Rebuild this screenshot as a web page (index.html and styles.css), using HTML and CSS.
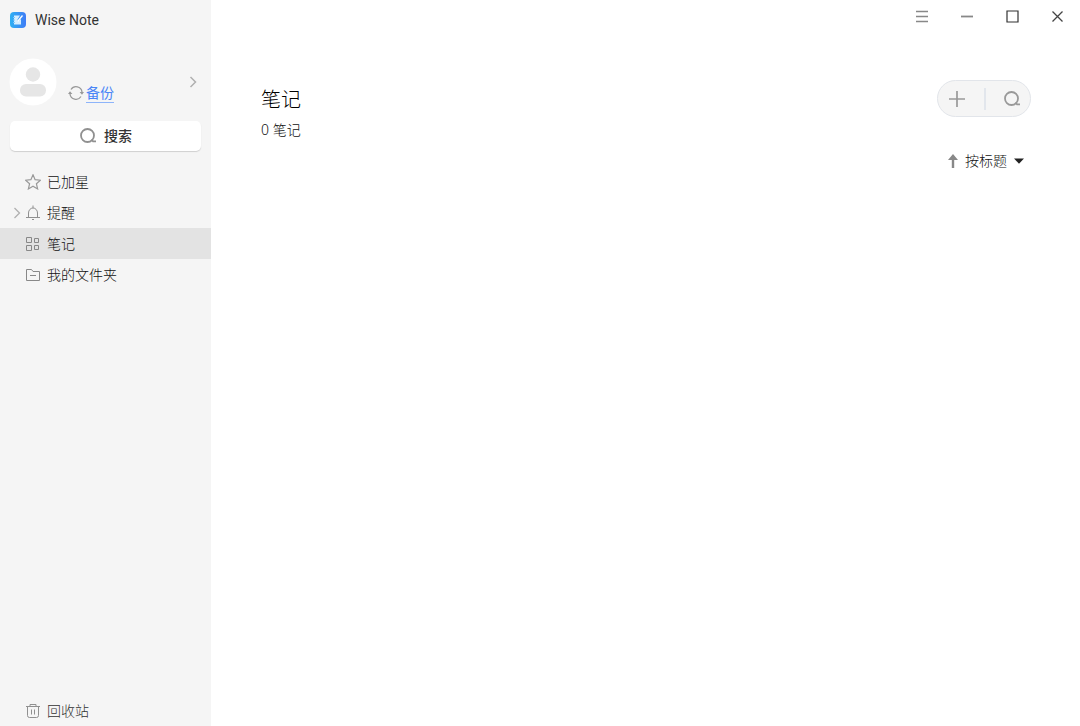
FILE: index.html
```html
<!DOCTYPE html>
<html lang="zh-CN">
<head>
    <meta charset="utf-8">
    <title>Wise Note</title>
    <link rel="stylesheet" href="styles.css">
</head>

<body>

<div id="app">
    <aside id="sidebar">
        <div class="brand">
            <svg width="16" height="16" viewBox="0 0 16 16">
                <defs>
                    <linearGradient id="logo" x1="0" y1="0" x2="1" y2="0">
                        <stop offset="0" stop-color="#2fb0f3"/>
                        <stop offset="1" stop-color="#3f7cf6"/>
                    </linearGradient>
                </defs>
                <rect width="16" height="16" rx="4" fill="url(#logo)"/>
                <path d="M4 3.500h6L7.500 7.500v2l3.500-2.500v5.500H4z" fill="#d4edff"/>
                <path d="M3 5.500h2M3 8h2M3 10.500h2" stroke="#7cc8fa"/>
                <path d="M7.500 9.500l5-6" stroke="#fff" stroke-width="1.300"/>
            </svg>
            <span>Wise Note</span>
        </div>

        <div class="account">
            <svg class="avatar" width="48" height="48" viewBox="0 0 48 48">
                <circle cx="24" cy="24" r="23.500" fill="#fff"/>
                <circle cx="24" cy="16.500" r="7.200" fill="#e6e6e6"/>
                <rect x="11" y="26" width="26" height="12.500" rx="6" fill="#e6e6e6"/>
            </svg>
            <a class="backup" href="#">
                <svg width="16" height="16" viewBox="0 0 16 16" fill="none" stroke="#999" stroke-width="1.300">
                    <path d="M2 9a6 6 0 0 0 11 2.500M14 7A6 6 0 0 0 3 4.500"/>
                    <path d="M0 9L2 6.300 4.400 9zM11.600 7h4.400L14 9.700z" fill="#999" stroke="none"/>
                </svg>
                <span>备份</span>
            </a>
            <button class="more" aria-label="账户">
                <svg width="8" height="12" viewBox="0 0 8 12" fill="none" stroke="#b0b0b0" stroke-width="1.500">
                    <path d="M1.500 1L6.500 6l-5 5"/>
                </svg>
            </button>
        </div>

        <button class="search">
            <svg width="18" height="18" viewBox="0 0 18 18" fill="none" stroke="#909090" stroke-width="1.800">
                <circle cx="8.500" cy="8.500" r="6.500"/>
                <path d="M12.500 12.500l1.500 1.800h3"/>
            </svg>
            <span>搜索</span>
        </button>

        <nav>
            <a class="item" href="#">
                <svg width="16" height="16" viewBox="0 0 16 16" fill="none" stroke="#999" stroke-width="1.200">
                    <path d="M8 .8l2.100 4.900 5.300.5-4 3.500 1.200 5.200L8 12.200l-4.600 2.700 1.200-5.200-4-3.500 5.300-.5z"/>
                </svg>
                <span>已加星</span>
            </a>
            <a class="item" href="#">
                <svg class="expand" width="8" height="12" viewBox="0 0 8 12" fill="none" stroke="#b0b0b0" stroke-width="1.300">
                    <path d="M1.500 1L6.500 6l-5 5"/>
                </svg>
                <svg width="16" height="16" viewBox="0 0 16 16" fill="none" stroke="#909090">
                    <path d="M1 12.500h14M3.500 12.500V8a4.500 5 0 0 1 9 0v4.500M8 .5v2.500M7 14.500h2"/>
                </svg>
                <span>提醒</span>
            </a>
            <a class="item active" href="#">
                <svg width="16" height="16" viewBox="0 0 16 16" fill="none" stroke="#888">
                    <path d="M1.500 1.500h5v5h-5zM9.500 2.500h4v4h-4zM1.500 9.500h5v5h-5zM9.500 9.500h4v4h-4z"/>
                </svg>
                <span>笔记</span>
            </a>
            <a class="item" href="#">
                <svg width="16" height="16" viewBox="0 0 16 16" fill="none" stroke="#888">
                    <path d="M1.500 13.500v-11h5l1.500 2h6.500v9zM5 8.500h6"/>
                </svg>
                <span>我的文件夹</span>
            </a>
        </nav>

        <a class="item trash" href="#">
            <svg width="16" height="16" viewBox="0 0 16 16" fill="none" stroke="#909090">
                <path d="M1 3.500h14M5 3.500v-2h6v2M2.500 3.500v9q0 2 2 2h7q2 0 2-2v-9M6.500 6.500v5M9.500 6.500v5"/>
            </svg>
            <span>回收站</span>
        </a>
    </aside>

    <main>
        <div class="window-buttons">
            <button aria-label="菜单">
                <svg width="13" height="13" viewBox="0 0 13 13" stroke="#888" stroke-width="1.500">
                    <path d="M0 1.500h12M0 6.500h12M0 11.500h12"/>
                </svg>
            </button>
            <button aria-label="最小化">
                <svg width="13" height="13" viewBox="0 0 13 13" stroke="#888" stroke-width="1.800">
                    <path d="M0 6.500h12"/>
                </svg>
            </button>
            <button aria-label="最大化">
                <svg width="13" height="13" viewBox="0 0 13 13" fill="none" stroke="#333" stroke-width="1.200">
                    <path d="M1 1h11v11H1z"/>
                </svg>
            </button>
            <button aria-label="关闭">
                <svg width="13" height="13" viewBox="0 0 13 13" stroke="#444" stroke-width="1.300">
                    <path d="M1.500 1.500l10 10M11.500 1.500l-10 10"/>
                </svg>
            </button>
        </div>

        <div class="heading">
            <div>
                <h1>笔记</h1>
                <p>0 笔记</p>
            </div>
            <div class="tools">
                <div class="pill">
                    <button aria-label="新建">
                        <svg width="18" height="18" viewBox="0 0 18 18" stroke="#999" stroke-width="1.700">
                            <path d="M9 1v16M1 9h16"/>
                        </svg>
                    </button>
                    <button aria-label="搜索">
                        <svg width="18" height="18" viewBox="0 0 18 18" fill="none" stroke="#999" stroke-width="1.800">
                            <circle cx="8.500" cy="8.500" r="6.500"/>
                            <path d="M12.500 12.500l1.500 1.800h3"/>
                        </svg>
                    </button>
                </div>
                <button class="sort">
                    <svg width="10" height="14" viewBox="0 0 10 14" fill="#888">
                        <path d="M5 0l5 6H6.200v8H3.800V6H0z"/>
                    </svg>
                    <span>按标题</span>
                    <svg width="10" height="6" viewBox="0 0 10 6" fill="#222">
                        <path d="M0 .5h10L5 5.800z"/>
                    </svg>
                </button>
            </div>
        </div>
    </main>
</div>

</body>
</html>
```
FILE: styles.css
```css
* {
    box-sizing: border-box;
}

body {
    margin: 0;
    background-color: white;
    color: #111;
    font-family: "Noto Sans", "Noto Sans CJK SC", sans-serif;
    font-size: 14px;
    font-weight: 300;
    line-height: 20px;
}

a {
    color: inherit;
    text-decoration: none;
}

button {
    display: flex;
    align-items: center;
    justify-content: center;
    padding: 0;
    border: 0;
    background: none;
    color: inherit;
    font: inherit;
    cursor: pointer;
}

svg {
    display: block;
    flex: none;
}

#app {
    display: flex;
    min-height: 100vh;
}

#sidebar {
    display: flex;
    flex-direction: column;
    flex: none;
    width: 211px;
    background-color: #f5f5f5;
}

.brand {
    display: flex;
    align-items: center;
    gap: 9px;
    height: 40px;
    padding-left: 10px;
    color: #333;
    font-family: Roboto, sans-serif;
    font-weight: 400;
}

.account {
    display: flex;
    align-items: center;
    margin-top: 18px;
    padding: 0 14px 0 9px;
}

.backup {
    display: flex;
    align-items: center;
    gap: 2px;
    margin: 22px 0 0 11px;
    color: #4a86f7;
    font-weight: 400;
}

.backup span {
    border-bottom: 1px solid #8db4fa;
    line-height: 18px;
}

.more {
    margin-left: auto;
}

.search {
    gap: 7px;
    height: 30px;
    margin: 15px 10px;
    border-radius: 5px;
    background-color: white;
    box-shadow: 0 1px 1px #d0d0d0;
    font-weight: 500;
    color: #333;
}

.item {
    position: relative;
    display: flex;
    align-items: center;
    gap: 6px;
    height: 31px;
    padding-left: 25px;
}

.item.active {
    background-color: #e3e3e3;
}

.item:hover {
    background-color: #e3e3e3;
}

.expand {
    position: absolute;
    left: 13px;
}

.trash {
    margin-top: auto;
    color: #333;
}

main {
    flex: 1;
}

.window-buttons {
    display: flex;
    justify-content: flex-end;
}

.window-buttons button {
    width: 45px;
    height: 32px;
}

.heading {
    display: flex;
    justify-content: space-between;
    padding: 48px 49px 0 50px;
}

h1 {
    margin: 5px 0;
    font-size: 20px;
    line-height: 30px;
    font-weight: 300;
    color: black;
}

p {
    margin: 0;
}

.tools {
    display: flex;
    flex-direction: column;
    align-items: flex-end;
    gap: 34px;
}

.pill {
    display: flex;
    align-items: center;
    height: 37px;
    border: 1px solid #e2e5ea;
    border-radius: 19px;
    background-color: #f5f5f5;
}

.pill button {
    width: 46px;
    height: 22px;
    padding-right: 8px;
}

.pill button + button {
    padding: 0 0 0 8px;
    border-left: 2px solid #e2e6ec;
}

.sort {
    gap: 7px;
    margin-right: 7px;
}
```
